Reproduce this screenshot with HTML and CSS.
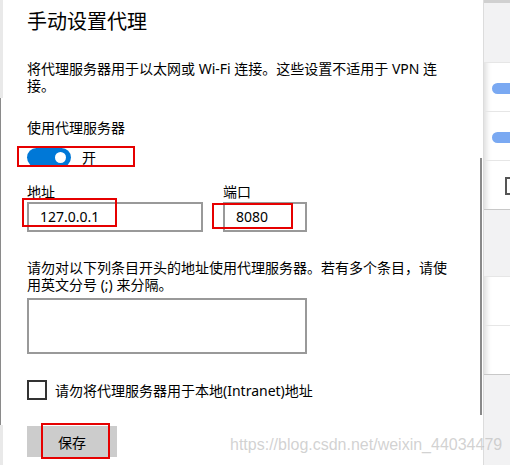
FILE: index.html
```html
<!DOCTYPE html>
<html lang="zh-CN">
<head>
  <meta charset="UTF-8">
  <title>手动设置代理</title>
  <link rel="stylesheet" href="styles.css">
</head>
<body>
  <div class="screen">
    <div class="left-edge"><span class="edge-line"></span></div>

    <div class="panel">
      <h1>手动设置代理</h1>
      <p class="desc">将代理服务器用于以太网或 Wi-Fi 连接。这些设置不适用于 VPN 连接。</p>

      <div class="label">使用代理服务器</div>
      <div class="toggle-row">
        <span class="toggle"><span class="knob"></span></span>
        <span class="toggle-text">开</span>
      </div>

      <div class="fields">
        <div class="field">
          <div class="label">地址</div>
          <div class="input addr">127.0.0.1</div>
        </div>
        <div class="field">
          <div class="label">端口</div>
          <div class="input port">8080</div>
        </div>
      </div>

      <p class="desc desc2">请勿对以下列条目开头的地址使用代理服务器。若有多个条目，请使用英文分号 (;) 来分隔。</p>
      <div class="textarea"></div>

      <div class="check-row">
        <span class="checkbox"></span>
        <span>请勿将代理服务器用于本地(Intranet)地址</span>
      </div>

      <button class="save">保存</button>
    </div>

    <div class="side">
      <div class="sec gray top"></div>
      <div class="sec"><span class="mini-toggle"></span></div>
      <div class="sec"><span class="mini-toggle"></span></div>
      <div class="sec dark-line"><span class="mini-check"></span></div>
      <div class="sec gray tall"></div>
      <div class="sec"></div>
      <div class="sec dark-line"></div>
      <div class="sec gray rest"></div>
    </div>

    <!-- overlays: scrollbar, red annotations, watermark -->
    <span class="scroll-thumb"></span>
    <span class="mark mark-toggle"></span>
    <span class="mark mark-addr"></span>
    <span class="mark mark-port"></span>
    <span class="mark mark-save"></span>
    <span class="watermark">https://blog.csdn.net/weixin_44034479</span>
  </div>
</body>
</html>
```

FILE: styles.css
```css
body {
  margin: 0;
  background: #fff;
  font-family: "Noto Sans", "Noto Sans CJK SC", sans-serif;
  color: #000;
}

.screen {
  position: relative;
  width: 510px;
  height: 465px;
  overflow: hidden;
  display: flex;
}

.left-edge {
  position: relative;
  width: 3px;
  background: linear-gradient(#e9e9e9 0, #e9e9e9 98px, #fff 98px, #fff 425px, #e9e9e9 425px);
}

.edge-line {
  position: absolute;
  left: 0;
  top: 98px;
  width: 1px;
  height: 327px;
  background: #8a8a8a;
}

.panel {
  width: 457px;
  padding: 8px 0 0 24px;
  font-size: 14px;
  line-height: 17px;
}

h1 {
  margin: 0;
  font-size: 20px;
  line-height: 28px;
  font-weight: normal;
}

.desc {
  margin: 24px 0 0;
  width: 424px;
}

.label {
  margin-top: 25px;
}

.toggle-row {
  margin-top: 11px;
  height: 20px;
  display: flex;
  align-items: center;
}

.toggle {
  position: relative;
  width: 44px;
  height: 19px;
  border-radius: 10px;
  background: #0078d7;
}

.knob {
  position: absolute;
  right: 5px;
  top: 4px;
  width: 11px;
  height: 11px;
  border-radius: 50%;
  background: #fff;
}

.toggle-text {
  margin-left: 11px;
}

.fields {
  display: flex;
  gap: 20px;
}

.fields .label {
  margin-top: 16px;
  margin-bottom: 2px;
}

.input {
  box-sizing: border-box;
  height: 30px;
  border: 2px solid #999;
  padding-left: 11px;
  line-height: 26px;
}

.addr {
  width: 176px;
}

.port {
  width: 84px;
}

.desc2 {
  margin-top: 27px;
}

.textarea {
  box-sizing: border-box;
  margin-top: 5px;
  width: 280px;
  height: 56px;
  border: 2px solid #999;
}

.check-row {
  margin-top: 26px;
  height: 20px;
  display: flex;
  align-items: center;
  gap: 8px;
}

.checkbox {
  box-sizing: border-box;
  width: 20px;
  height: 20px;
  border: 2px solid #333;
}

.save {
  display: block;
  margin-top: 26px;
  width: 90px;
  height: 31px;
  border: none;
  background: #cccccc;
  font-family: inherit;
  font-size: 14px;
  color: #000;
  padding: 0;
}

.side {
  width: 26px;
  display: flex;
  flex-direction: column;
  box-shadow: inset 6px 0 5px -3px rgba(0, 0, 0, 0.12);
  border-left: 1px solid #dcdcdc;
}

.sec {
  position: relative;
  height: 48px;
  border-bottom: 1px solid #e6e6e6;
}

.sec.gray {
  background: #f2f2f3;
}

.sec.top {
  height: 62px;
  border-top: 3px solid #d0d0d0;
  box-sizing: border-box;
  height: 63px;
}

.sec.tall {
  height: 66px;
}

.sec.rest {
  flex: 1;
  border-bottom: none;
}

.sec.dark-line {
  border-bottom-color: #c8c8c8;
}

.mini-toggle {
  position: absolute;
  left: 8px;
  top: 20px;
  width: 30px;
  height: 11px;
  border-radius: 6px;
  background: #7aa9f2;
}

.mini-check {
  position: absolute;
  left: 21px;
  top: 16px;
  width: 14px;
  height: 14px;
  border: 2px solid #555;
}

.scroll-thumb {
  position: absolute;
  left: 480px;
  top: 158px;
  width: 2px;
  height: 257px;
  background: #8a8a8a;
}

.mark {
  position: absolute;
  box-sizing: border-box;
  border: 2px solid #e60000;
}

.mark-toggle {
  left: 17px;
  top: 146px;
  width: 118px;
  height: 21px;
}

.mark-addr {
  left: 22px;
  top: 198px;
  width: 95px;
  height: 29px;
}

.mark-port {
  left: 212px;
  top: 203px;
  width: 81px;
  height: 26px;
}

.mark-save {
  left: 41px;
  top: 423px;
  width: 69px;
  height: 36px;
}

.watermark {
  position: absolute;
  left: 230px;
  top: 436px;
  font-family: "Liberation Sans", Arial, sans-serif;
  font-size: 16px;
  line-height: 18px;
  color: rgba(190, 190, 190, 0.7);
  white-space: nowrap;
}
```
